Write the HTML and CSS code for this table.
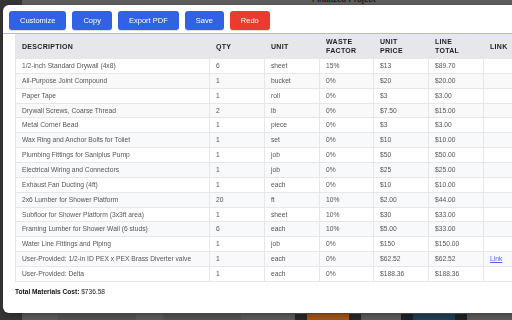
FILE: index.html
```html
<!DOCTYPE html>
<html>
<head>
<meta charset="utf-8">
<link rel="stylesheet" href="styles.css">
</head>
<body>
<div class="page">
  <aside class="sidebar"></aside>
  <main class="main">
    <header class="page-head"><h1 class="page-title">Finalized Project</h1></header>
    <div class="page-body"></div>
    <div class="thumbs">
      <div class="bar bar-a"></div>
      <div class="bar bar-b"></div>
      <div class="thumb thumb-a"><div class="thumb-in orange"></div></div>
      <div class="thumb thumb-b"><div class="thumb-in blue"></div></div>
    </div>
  </main>
</div>

<div class="modal">
  <div class="toolbar">
    <button class="btn">Customize</button>
    <button class="btn">Copy</button>
    <button class="btn">Export PDF</button>
    <button class="btn">Save</button>
    <button class="btn btn-red">Redo</button>
  </div>
  <div class="content">
    <table class="mat">
      <colgroup>
        <col class="c-desc"><col class="c-n"><col class="c-n"><col class="c-w"><col class="c-n"><col class="c-n"><col class="c-n">
      </colgroup>
      <thead>
        <tr><th>DESCRIPTION</th><th>QTY</th><th>UNIT</th><th>WASTE<br>FACTOR</th><th>UNIT<br>PRICE</th><th>LINE<br>TOTAL</th><th>LINK</th></tr>
      </thead>
      <tbody>
        <tr><td>1/2-inch Standard Drywall (4x8)</td><td>6</td><td>sheet</td><td>15%</td><td>$13</td><td>$89.70</td><td></td></tr>
        <tr><td>All-Purpose Joint Compound</td><td>1</td><td>bucket</td><td>0%</td><td>$20</td><td>$20.00</td><td></td></tr>
        <tr><td>Paper Tape</td><td>1</td><td>roll</td><td>0%</td><td>$3</td><td>$3.00</td><td></td></tr>
        <tr><td>Drywall Screws, Coarse Thread</td><td>2</td><td>lb</td><td>0%</td><td>$7.50</td><td>$15.00</td><td></td></tr>
        <tr><td>Metal Corner Bead</td><td>1</td><td>piece</td><td>0%</td><td>$3</td><td>$3.00</td><td></td></tr>
        <tr><td>Wax Ring and Anchor Bolts for Toilet</td><td>1</td><td>set</td><td>0%</td><td>$10</td><td>$10.00</td><td></td></tr>
        <tr><td>Plumbing Fittings for Saniplus Pump</td><td>1</td><td>job</td><td>0%</td><td>$50</td><td>$50.00</td><td></td></tr>
        <tr><td>Electrical Wiring and Connectors</td><td>1</td><td>job</td><td>0%</td><td>$25</td><td>$25.00</td><td></td></tr>
        <tr><td>Exhaust Fan Ducting (4ft)</td><td>1</td><td>each</td><td>0%</td><td>$10</td><td>$10.00</td><td></td></tr>
        <tr><td>2x6 Lumber for Shower Platform</td><td>20</td><td>ft</td><td>10%</td><td>$2.00</td><td>$44.00</td><td></td></tr>
        <tr><td>Subfloor for Shower Platform (3x3ft area)</td><td>1</td><td>sheet</td><td>10%</td><td>$30</td><td>$33.00</td><td></td></tr>
        <tr><td>Framing Lumber for Shower Wall (6 studs)</td><td>6</td><td>each</td><td>10%</td><td>$5.00</td><td>$33.00</td><td></td></tr>
        <tr><td>Water Line Fittings and Piping</td><td>1</td><td>job</td><td>0%</td><td>$150</td><td>$150.00</td><td></td></tr>
        <tr><td>User-Provided: 1/2-in ID PEX x PEX Brass Diverter valve</td><td>1</td><td>each</td><td>0%</td><td>$62.52</td><td>$62.52</td><td><a class="link" href="#">Link</a></td></tr>
        <tr><td>User-Provided: Delta</td><td>1</td><td>each</td><td>0%</td><td>$188.36</td><td>$188.36</td><td></td></tr>
      </tbody>
    </table>
    <p class="total"><strong>Total Materials Cost:</strong> $736.58</p>
  </div>
</div>
</body>
</html>
```

FILE: styles.css
```css
html, body {
  margin: 0;
  padding: 0;
  width: 512px;
  height: 320px;
  overflow: hidden;
  font-family: "Liberation Sans", Arial, sans-serif;
  background: #5b5b5b;
}
.page {
  display: flex;
  height: 320px;
}
.sidebar {
  width: 22px;
  flex: none;
  background: #363636;
}
.main {
  flex: 1;
  display: flex;
  flex-direction: column;
  background: #5b5b5b;
}
.page-head {
  height: 5px;
  overflow: hidden;
  display: flex;
  align-items: flex-end;
  padding-left: 290px;
  background: #5e5e5e;
}
.page-title {
  margin: 0;
  font-size: 8px;
  line-height: 8px;
  font-weight: bold;
  color: #1c1c1c;
  margin-bottom: 1px;
  flex: none;
}
.page-body { flex: 1; }
.thumbs {
  height: 6px;
  display: flex;
}
.bar { width: 78px; background: #535353; }
.bar-a { margin-left: 36px; }
.bar-b { margin-left: 27px; }
.thumb { width: 66px; display: flex; justify-content: center; }
.thumb-a { margin-left: 54px; background: #2b2628; }
.thumb-b { margin-left: 40px; background: #1c2429; }
.thumb-in { width: 42px; }
.orange { background: #a4540e; }
.blue { background: #1d3f57; }

/* modal */
.modal {
  position: fixed;
  left: 3px;
  top: 5px;
  width: 580px;
  height: 308px;
  background: #fff;
  border-radius: 6px;
  overflow: hidden;
  box-shadow: 0 2px 6px rgba(0,0,0,0.3);
}
.toolbar {
  display: flex;
  gap: 6px;
  padding: 6px 6px 3px;
}
.btn {
  height: 19px;
  padding: 0 11px;
  border: none;
  border-radius: 3px;
  background: #3261e6;
  color: #fff;
  font-family: "Liberation Sans", Arial, sans-serif;
  font-size: 7.5px;
  line-height: 19px;
  box-shadow: 0 1px 1px rgba(0,0,0,0.15);
}
.btn-red { background: #eb3b31; }
.content {
  border-top: 1px solid #bdb3e6;
  padding: 0 12px;
}
.mat {
  border-collapse: collapse;
  table-layout: fixed;
  width: 523px;
}
.c-desc { width: 194px; }
.c-n { width: 55px; }
.c-w { width: 54px; }
.mat th {
  background: #e5e7eb;
  color: #1f1f1f;
  font-size: 7px;
  letter-spacing: 0.3px;
  font-weight: bold;
  text-align: left;
  line-height: 9px;
  padding: 3px 6px;
  border: 1px solid #e5e7eb;
  border-top: none;
  vertical-align: middle;
}
.mat td {
  font-size: 6.7px;
  color: #555;
  line-height: 8.86px;
  padding: 3px 6px 2px;
  border: 1px solid #e6e7ea;
  white-space: nowrap;
  overflow: hidden;
}
.mat tbody tr:nth-child(even) td { background: #f8f9fa; }
.link { color: #5b5ff0; }
.total {
  margin: 6px 0 0;
  font-size: 6.6px;
  color: #222;
}
.total strong { color: #111; }
```
